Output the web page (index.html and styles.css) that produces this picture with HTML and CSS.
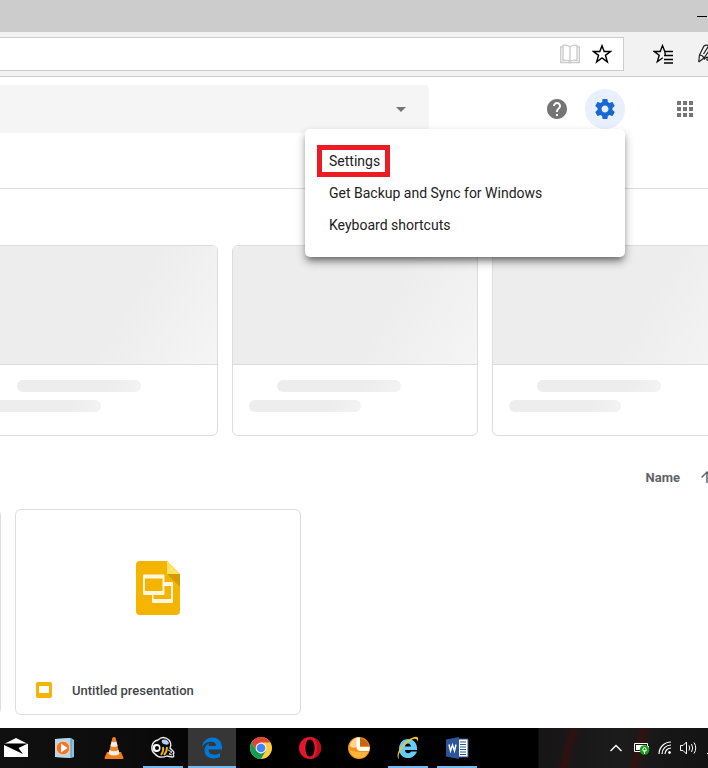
FILE: index.html
```
<!DOCTYPE html>
<html lang="en">
<head>
  <meta charset="UTF-8">
  <meta name="viewport" content="width=device-width, initial-scale=1.0">
  <title>My Drive</title>
  <link rel="stylesheet" href="styles.css">
</head>
<body>

  <!-- Browser window -->
  <div class="titlebar">
    <button class="minimize" aria-label="Minimize"><svg width="12" height="2" viewBox="0 0 12 2"><path d="M1 1.500h10" stroke="#000"/></svg></button>
  </div>
  <div class="toolbar">
    <div class="address">
      <input type="text" class="address-input" aria-label="Address">
      <button aria-label="Reading view">
        <svg width="20" height="20" viewBox="0 0 20 20" fill="none" stroke="#ccc" stroke-width="1.4">
          <path d="M10 3.2C8.500 1.200 5 .9 3 1.500V16.500C5 16 8.500 16 10 17.500C11.500 16 15 16 17 16.500V1.500C15 .9 11.500 1.200 10 3.200zM10 3V17.500M3 3H.7V18.500H8.500L10 19L11.500 18.500H19.300V3H17"/>
        </svg>
      </button>
      <button aria-label="Add to favorites">
        <svg width="20" height="20" viewBox="0 0 20 20" fill="none" stroke="#000" stroke-width="1.500">
          <path d="M10 1.800L12.200 7.600H18.400L13.500 11.400L15.300 17.800L10 14L4.700 17.800L6.500 11.400L1.600 7.600H7.800z"/>
        </svg>
      </button>
    </div>
    <button class="hub" aria-label="Favorites">
      <svg width="20" height="20" viewBox="0 0 20 20" fill="none" stroke="#000" stroke-width="1.400">
        <path d="M20 7.500H11.800L9.500 1.600L7.200 7.500H1.300L6.200 11.300L4.300 17.800L9.800 13.800M11.800 7.500L12.500 11.500M11 11.500H20M11 15.500H20M11 19H20"/>
      </svg>
    </button>
    <button class="notes" aria-label="Add notes">
      <svg width="20" height="20" viewBox="0 0 20 20" fill="none" stroke="#222" stroke-width="1.200">
        <path d="M.7 18L1.500 11L6 2Q8 .5 10 1.500L13 4L6 14L.7 18M1.500 11Q4.500 11 6 14M5.500 10L10.500 2M6 15.500Q9 12 9.500 13.500Q8 17 10 16Q13 13 18 16"/>
      </svg>
    </button>
  </div>

  <!-- Drive header -->
  <header class="header">
    <div class="search">
      <input type="text" class="search-input" aria-label="Search Drive">
      <button class="search-options" aria-label="Search options">
        <svg width="10" height="5" viewBox="0 0 10 5"><path d="M0 0h10L5 5z" fill="#757575"/></svg>
      </button>
    </div>
    <div class="header-icons">
      <button class="round" aria-label="Help">
        <svg width="24" height="24" viewBox="0 0 24 24" fill="#757575"><path d="M12 2C6.480 2 2 6.480 2 12s4.480 10 10 10 10-4.480 10-10S17.520 2 12 2zm1 17h-2v-2h2v2zm2.070-7.750l-.9.92C13.450 12.900 13 13.500 13 15h-2v-.5c0-1.100.45-2.100 1.170-2.830l1.240-1.260c.37-.36.59-.86.59-1.410 0-1.100-.9-2-2-2s-2 .9-2 2H8c0-2.210 1.790-4 4-4s4 1.790 4 4c0 .88-.36 1.680-.93 2.250z"/></svg>
      </button>
      <div class="settings">
        <button class="round active" aria-label="Settings">
          <svg width="24" height="24" viewBox="0 0 24 24" fill="#1967d2"><path d="M19.430 12.980c.04-.32.07-.64.07-.98s-.03-.66-.07-.98l2.110-1.650c.19-.15.24-.42.12-.64l-2-3.460c-.12-.22-.39-.3-.61-.22l-2.490 1c-.52-.4-1.080-.73-1.690-.98l-.38-2.650C14.460 2.180 14.250 2 14 2h-4c-.25 0-.46.18-.49.42l-.38 2.650c-.61.25-1.170.59-1.690.98l-2.490-1c-.23-.09-.49 0-.61.22l-2 3.460c-.13.22-.07.49.12.64l2.110 1.650c-.04.32-.07.65-.07.98s.03.66.07.98l-2.110 1.650c-.19.15-.24.42-.12.64l2 3.460c.12.22.39.3.61.22l2.490-1c.52.4 1.080.73 1.690.98l.38 2.650c.03.24.24.42.49.42h4c.25 0 .46-.18.49-.42l.38-2.650c.61-.25 1.170-.59 1.690-.98l2.490 1c.23.09.49 0 .61-.22l2-3.460c.12-.22.07-.49-.12-.64l-2.110-1.650zM12 15.500c-1.930 0-3.500-1.570-3.500-3.500s1.570-3.500 3.500-3.500 3.500 1.570 3.500 3.500-1.570 3.500-3.500 3.500z"/></svg>
        </button>
        <div class="menu">
          <button class="menu-item"><span class="highlight">Settings</span></button>
          <button class="menu-item">Get Backup and Sync for Windows</button>
          <button class="menu-item">Keyboard shortcuts</button>
        </div>
      </div>
      <button class="round apps" aria-label="Google apps">
        <svg width="24" height="24" viewBox="0 0 24 24" fill="#757575"><path d="M4 8h4V4H4v4zm6 12h4v-4h-4v4zm-6 0h4v-4H4v4zm0-6h4v-4H4v4zm6 0h4v-4h-4v4zm6-10v4h4V4h-4zm-6 4h4V4h-4v4zm6 6h4v-4h-4v4zm0 6h4v-4h-4v4z"/></svg>
      </button>
    </div>
  </header>

  <main class="content">
    <div class="quick-access">
      <div class="placeholder">
        <div class="placeholder-thumb"></div>
        <div class="line line-title"></div>
        <div class="line line-sub"></div>
      </div>
      <div class="placeholder">
        <div class="placeholder-thumb"></div>
        <div class="line line-title"></div>
        <div class="line line-sub"></div>
      </div>
      <div class="placeholder">
        <div class="placeholder-thumb"></div>
        <div class="line line-title"></div>
        <div class="line line-sub"></div>
      </div>
    </div>

    <div class="sort">
      <button class="sort-name">Name</button>
      <button class="sort-dir" aria-label="Reverse sort direction">
        <svg width="18" height="18" viewBox="0 0 24 24" fill="#5f6368"><path d="M4 12l1.410 1.410L11 7.830V20h2V7.830l5.580 5.590L20 12l-8-8-8 8z"/></svg>
      </button>
    </div>

    <div class="files">
      <div class="file"></div>
      <div class="file">
        <div class="file-preview">
          <svg width="44" height="54" viewBox="0 0 44 54">
            <path d="M4 0H31L44 13V50Q44 54 40 54H4Q0 54 0 50V4Q0 0 4 0z" fill="#f5b400"/>
            <path d="M31 13H44V26z" fill="#d49c00"/>
            <path d="M31 0L44 13H31z" fill="#ffe168"/>
            <path d="M28 21H36Q37 21 37 22V41Q37 42 36 42H17Q16 42 16 41V34H17.500V38H35V25H28z" fill="#fff8e1"/>
            <path d="M8 13.500H27.500Q28.500 13.500 28.500 14.500V33Q28.500 34 27.500 34H8Q7 34 7 33V14.500Q7 13.500 8 13.500zM9 17.500V30H26.500V17.500z" fill="#fff8e1" fill-rule="evenodd"/>
          </svg>
        </div>
        <div class="file-info">
          <svg width="16" height="16" viewBox="0 0 16 16"><rect width="16" height="16" rx="2" fill="#f5b400"/><rect x="3" y="4" width="10" height="7" fill="#fff"/></svg>
          <span>Untitled presentation</span>
        </div>
      </div>
    </div>
  </main>

  <!-- Windows taskbar -->
  <footer class="taskbar">
    <div class="tasks">
      <button class="task" aria-label="Mail">
        <svg width="24" height="20" viewBox="0 0 24 20"><path d="M0 6L12 0L24 6V19H0z" fill="#fff"/><path d="M0 5.500H24L14.500 10L19 16L0 7z" fill="#000"/></svg>
      </button>
      <button class="task" aria-label="Media Player">
        <svg width="22" height="22" viewBox="0 0 22 22"><path d="M1 2L17 1L20 3V20L17 21L1 20z" fill="#8bbfdc"/><path d="M1 2L17 1V21L1 20z" fill="#b6d8ea"/><path d="M17 1V21" stroke="#5b8eab"/><circle cx="9" cy="11" r="6.800" fill="#f3752b" stroke="#fbd0a4"/><path d="M7 6.500L13.500 11L7 15.500z" fill="#fff"/></svg>
      </button>
      <button class="task" aria-label="VLC media player">
        <svg width="22" height="24" viewBox="0 0 22 24"><path d="M4 16H18L20.500 22Q20.500 23 19.500 23H2.500Q1.500 23 1.500 22z" fill="#f57c12"/><path d="M9.500 1.500Q11 .5 12.500 1.500L16.500 18Q11 21 5.500 18z" fill="#f58220"/><path d="M8.600 5.500Q11 7 13.400 5.500L14.600 10Q11 12 7.400 10zM6.300 14Q11 16.500 15.700 14L16.500 18Q11 21 5.500 18z" fill="#eee"/></svg>
      </button>
      <button class="task open" aria-label="Bee">
        <svg width="26" height="24" viewBox="0 0 26 24"><path d="M8 4Q13 -1 19 4Q22 8 20 12L23 15Q25 17 23 18Q25 21 22 21L17 20Q9 23 5 18Q1 15 2 10Q3 5 8 4z" fill="#0b0b0b" stroke="#eee" stroke-width="1.300"/><path d="M12 4Q17 2 19 7Q18 10 14 8Q11 7 12 4z" fill="#b4d0f0"/><path d="M13 11Q14 15 11 19M17 11Q17 16 14 19" stroke="#f5b80a" stroke-width="1.800" fill="none"/><circle cx="6.500" cy="12" r="4" fill="#fff"/><circle cx="7" cy="12" r="2" fill="#000"/><path d="M18 14l4 2-3 2 3 1" stroke="#ddd" fill="none"/></svg>
      </button>
      <button class="task open current" aria-label="Microsoft Edge">
        <svg width="22" height="22" viewBox="0 0 22 22"><path d="M1 9.500C2 4 6 .5 11.500 .5C17.500 .5 21 5 21 10V12.500H7.500C7.800 18 14 19 19 16V20C13 23 3.500 21.500 3.500 13.500C3.500 10 5.500 7.500 8.500 6C7.800 7 7.500 8 7.500 9H15C15 4.500 11.500 4.500 9 4.800C5.500 5.300 3 7 1 9.500z" fill="#0078d7"/></svg>
      </button>
      <button class="task" aria-label="Chrome">
        <svg width="22" height="22" viewBox="0 0 22 22"><circle cx="11" cy="11" r="11" fill="#ffcd40"/><path d="M1.500 5.500A11 11 0 0 1 20.500 5.500H11L6.200 13.700z" fill="#db4437"/><path d="M1.500 5.500L6.200 13.800L11 16.500L15.800 13.800L11 22A11 11 0 0 1 1.500 5.500z" fill="#0f9d58"/><circle cx="11" cy="11" r="5.400" fill="#f1f1f1"/><circle cx="11" cy="11" r="4.300" fill="#4285f4"/></svg>
      </button>
      <button class="task" aria-label="Opera">
        <svg width="22" height="22" viewBox="0 0 22 22"><path d="M11 0A11 11 0 1 0 11 22A11 11 0 1 0 11 0zM11 2.500C14 2.500 15.500 6 15.500 11S14 19.500 11 19.500S6.500 16 6.500 11S8 2.500 11 2.500z" fill="#e5152b" fill-rule="evenodd"/><path d="M14 .5Q22 3 22 11T14 21.500Q18 18 18 11T14 .5z" fill="#b70d1e"/></svg>
      </button>
      <button class="task" aria-label="Clock">
        <svg width="22" height="22" viewBox="0 0 22 22"><circle cx="11" cy="11" r="11" fill="#ef9418"/><path d="M1.500 9Q4 1 9 1V10Q5 12 1.500 9z" fill="#ffd58c"/><path d="M12 1Q20 3 21 9H12z" fill="#c9640c"/><path d="M1 13Q9 16 20 15Q17 21.500 11 21.500T1 13z" fill="#ffb43c"/><path d="M8.500 .5H12V10H21.500Q22 12 21 14H12Q8.500 13 8.500 10z" fill="#fff"/></svg>
      </button>
      <button class="task open" aria-label="Internet Explorer">
        <svg width="24" height="24" viewBox="0 0 24 24"><path d="M12 3C17.500 3 21 7 21 12V14H9C9 18 14 18 15 15.500H21C17 26 3 23 3 13C3 7 7 3 12 3zM9 10.500H15C14.500 6.500 9.500 6.500 9 10.500z" fill="#68cdf6" fill-rule="evenodd"/><path d="M3 23C-2 19 7 5 17 1.500C22-.5 23 2 21.500 6C21.500 2 18 2 14 5C7 9 1 18 3 23z" fill="#f5c522"/></svg>
      </button>
      <button class="task open" aria-label="Word">
        <svg width="23" height="22" viewBox="0 0 23 22"><path d="M12 2H22V20H12z" fill="#fff" stroke="#2b579a"/><path d="M14 5H20M14 7.500H20M14 10H20M14 12.500H20M14 15H20M14 17.500H20" stroke="#2b579a"/><path d="M0 2.500L13 0V22L0 19.500z" fill="#2b579a"/><path d="M3 7.500L4.500 14L6.500 8L8.500 14L10 7.500" stroke="#fff" stroke-width="1.400" fill="none"/></svg>
      </button>
    </div>
    <div class="tray">
      <button class="tray-more" aria-label="Show hidden icons"><svg width="12" height="8" viewBox="0 0 12 8"><path d="M.5 7L6 1.500L11.500 7" fill="none" stroke="#fff" stroke-width="1.400"/></svg></button>
      <button aria-label="Battery"><svg width="16" height="14" viewBox="0 0 16 14"><path d="M.5 2.500H13.500V10.500H.5z" fill="none" stroke="#fff"/><path d="M2 4H12V9H2zM14 5h1v3h-1z" fill="#fff"/><circle cx="10.500" cy="9" r="4.800" fill="#16a016"/><path d="M10.500 13V9M10.500 6Q8 8 9 10H12Q13 8 10.500 6z" stroke="#fff" fill="none"/></svg></button>
      <button aria-label="Network"><svg width="14" height="14" viewBox="0 0 14 14" fill="none" stroke="#fff"><path d="M1 13A12 12 0 0 1 13 1M4 13A9 9 0 0 1 13 4M7 13A6 6 0 0 1 13 7" stroke-width="1.200"/><circle cx="11.500" cy="11.500" r="1" fill="#fff"/></svg></button>
      <button aria-label="Volume"><svg width="17" height="14" viewBox="0 0 17 14" fill="none" stroke="#fff"><path d="M.5 4.500H3L6.500 1V13L3 9.500H.5zM9 4.500Q10.500 7 9 9.500M11.500 3Q14 7 11.500 11M14 1.500Q17.500 7 14 12.500"/></svg></button>
      <button class="tray-input" aria-label="Input"><svg width="1" height="12" viewBox="0 0 1 12"><path d="M0 11.500h1" stroke="#fff"/></svg></button>
    </div>
  </footer>

</body>
</html>
```
FILE: styles.css
```
* {
  box-sizing: border-box;
}
body {
  margin: 0;
  min-height: 100vh;
  display: flex;
  flex-direction: column;
  overflow: hidden;
  background: #fff;
  font-family: Roboto, Arial, sans-serif;
}
button {
  display: flex;
  align-items: center;
  justify-content: center;
  flex: none;
  margin: 0;
  padding: 0;
  border: 0;
  background: none;
  font-family: inherit;
  cursor: pointer;
}
svg {
  display: block;
  flex: none;
}
input {
  flex: 1;
  min-width: 0;
  border: 0;
  outline: 0;
  background: none;
}

/* Browser window */
.titlebar {
  display: flex;
  justify-content: flex-end;
  height: 32px;
  background: #ccc;
}
.minimize {
  width: 12px;
}
.toolbar {
  display: flex;
  align-items: center;
  height: 45px;
  background: #f2f2f2;
  border-bottom: 1px solid #ccc;
}
.address {
  flex: 1;
  display: flex;
  align-items: center;
  gap: 12px;
  height: 34px;
  padding-right: 11px;
  background: #fff;
  border: 1px solid #ccc;
  border-left: 0;
}
.hub {
  margin-left: 29px;
}
.notes {
  width: 10px;
  margin-left: 25px;
  justify-content: flex-start;
}

/* Drive header */
.header {
  display: flex;
  align-items: flex-start;
  height: 112px;
  padding-top: 8px;
  border-bottom: 1px solid #dadce0;
}
.search {
  flex: 1;
  display: flex;
  height: 48px;
  background: #f5f5f5;
  border-radius: 0 4px 4px 0;
}
.search-options {
  width: 56px;
}
.header-icons {
  display: flex;
  gap: 8px;
  padding: 4px 3px 0 108px;
}
.round {
  width: 40px;
  height: 40px;
  border-radius: 50%;
}
.round.active {
  background: #e8f0fe;
}
.apps {
  margin-left: 32px;
}
.settings {
  position: relative;
}
.menu {
  position: absolute;
  top: 40px;
  right: 0;
  z-index: 1;
  width: 320px;
  padding: 16px 0;
  background: #fff;
  border-radius: 5px;
  box-shadow: 0 5px 6px -3px rgba(0, 0, 0, .4), 0 5px 10px rgba(0, 0, 0, .32);
}
.menu-item {
  justify-content: flex-start;
  width: 100%;
  height: 32px;
  padding: 0 24px;
  font-size: 14px;
  color: #212121;
}
.highlight {
  margin-left: -12px;
  padding: 0 5px 0 7px;
  line-height: 22px;
  border: 5px solid #ed1c24;
}

/* Drive content */
.content {
  flex: 1;
  padding-top: 56px;
}
.quick-access {
  display: flex;
  gap: 14px;
  margin-left: -28px;
}
.placeholder {
  flex: none;
  width: 246px;
  height: 191px;
  border: 1px solid #dadce0;
  border-radius: 6px;
  overflow: hidden;
}
.placeholder-thumb {
  height: 119px;
  margin-bottom: 15px;
  background: linear-gradient(120deg, #ededed 60%, #f5f5f5);
  border-bottom: 1px solid #dadce0;
}
.line {
  height: 12px;
  margin-bottom: 8px;
  border-radius: 6px;
  background: linear-gradient(120deg, #ededed 70%, #f3f3f3);
}
.line-title {
  width: 124px;
  margin-left: 44px;
}
.line-sub {
  width: 112px;
  margin-left: 16px;
}
.sort {
  display: flex;
  justify-content: flex-end;
  align-items: center;
  gap: 18px;
  height: 18px;
  margin-top: 32px;
}
.sort-name {
  font-size: 13px;
  font-weight: bold;
  color: #5f6368;
}
.sort-dir {
  width: 10px;
  justify-content: flex-start;
}
.files {
  display: flex;
  gap: 14px;
  margin: 23px 0 13px -285px;
}
.file {
  flex: none;
  width: 286px;
  height: 206px;
  border: 1px solid #dadce0;
  border-radius: 6px;
}
.file-preview {
  display: flex;
  align-items: center;
  justify-content: center;
  height: 156px;
}
.file-info {
  display: flex;
  align-items: center;
  gap: 20px;
  height: 48px;
  padding-left: 20px;
  font-size: 13px;
  font-weight: 500;
  color: #414549;
}

/* Windows taskbar */
.taskbar {
  display: flex;
  justify-content: space-between;
  height: 40px;
  background:
    linear-gradient(105deg, transparent 548px, #32100f 554px, transparent 562px, transparent 616px, #35110f 622px, transparent 630px),
    linear-gradient(90deg, #101010, #0c0c0c 130px, #000 240px, #000 538px, #171515 539px, #1b1b1b 620px, #131313);
}
.tasks {
  display: flex;
  gap: 1px;
  margin-left: -8px;
}
.task {
  position: relative;
  width: 48px;
}
.task.current {
  background: #363636;
}
.task.open::after {
  content: "";
  position: absolute;
  bottom: 0;
  left: 4px;
  right: 4px;
  height: 2px;
  background: #76b9ed;
}
.task.current::after {
  left: 0;
  right: 0;
}
.tray {
  display: flex;
  align-items: center;
  gap: 8px;
}
.tray-more {
  margin-right: 4px;
}
.tray-input {
  margin-left: 2px;
}
```
